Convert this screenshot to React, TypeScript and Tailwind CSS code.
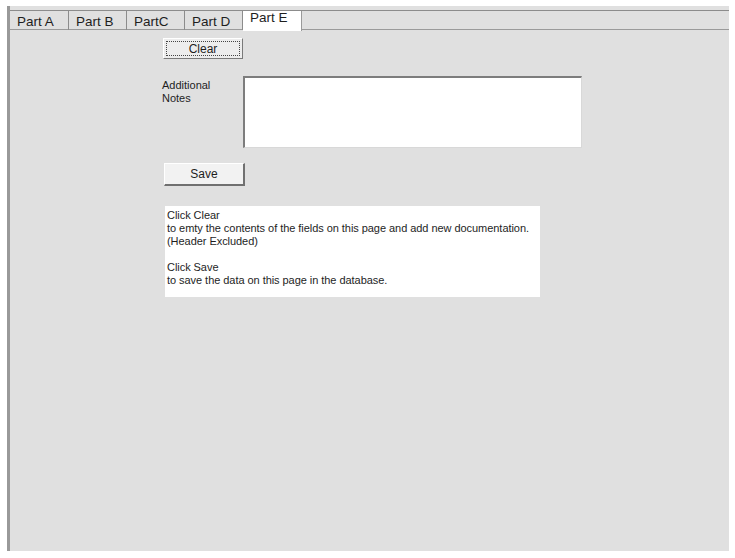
import React from "react";

const tabs = ["Part A", "Part B", "PartC", "Part D", "Part E"];
const widths = ["w-[59px]", "w-[58px]", "w-[58px]", "w-[58px]", "w-[59px]"];

export default function App() {
  return (
    <div className="w-[735px] h-[558px] bg-white pt-[6px] pl-[7px] font-['Liberation_Sans',Arial,sans-serif] text-[#1e1e1e]">
      <div className="w-[722px] h-[545px] bg-[#e0e0e0] border-l-[3px] border-l-[#999999] flex flex-col">
        <div className="mt-[4px] h-[20px] flex border-t border-t-[#8c8c8c] border-b border-b-[#9a9a9a]">
          {tabs.map((t, i) =>
            i === 4 ? (
              <div
                key={t}
                className={`${widths[i]} h-[20px] -mb-px bg-white border-r border-r-[#9a9a9a] pl-[7px] text-[13.5px] leading-[14px] pt-0 relative z-10`}
              >
                {t}
              </div>
            ) : (
              <div
                key={t}
                className={`${widths[i]} h-[19px] border-r border-r-[#8c8c8c] pl-[7px] text-[13.5px] leading-[17px] pt-[2px]`}
              >
                {t}
              </div>
            )
          )}
          <div className="flex-1" />
        </div>

        <div className="flex flex-col pl-[150px]">
          <button className="ml-[3px] mt-[8px] w-[80px] h-[21px] bg-[#ededed] border border-t-white border-l-white border-r-[#7a7a7a] border-b-[#7a7a7a] p-[2px]">
            <div className="w-full h-full border border-dotted border-[#444] flex items-center justify-center text-[12px] leading-none">
              Clear
            </div>
          </button>

          <div className="flex mt-[17px] ml-[2px]">
            <div className="w-[81px] pt-[3px] text-[11px] leading-[13px]">
              Additional
              <br />
              Notes
            </div>
            <div className="w-[339px] h-[72px] bg-white border-t-2 border-l-2 border-t-[#7d7d7d] border-l-[#7d7d7d] border-r border-b border-r-[#d8d8d8] border-b-[#d8d8d8]" />
          </div>

          <button className="ml-[4px] mt-[15px] w-[81px] h-[23px] bg-[#f2f2f2] border border-t-white border-l-white border-r-[#707070] border-b-[#707070] border-r-2 border-b-2 flex items-center justify-center text-[12px] leading-none">
            Save
          </button>

          <div className="ml-[5px] mt-[20px] w-[375px] h-[91px] bg-white pl-[2px] pt-[3px] text-[11px] leading-[13px] tracking-[-0.05px]">
            <div>Click Clear</div>
            <div>to emty the contents of the fields on this page and add new documentation.</div>
            <div>(Header Excluded)</div>
            <div>&nbsp;</div>
            <div>Click Save</div>
            <div>to save the data on this page in the database.</div>
          </div>
        </div>
      </div>
    </div>
  );
}
